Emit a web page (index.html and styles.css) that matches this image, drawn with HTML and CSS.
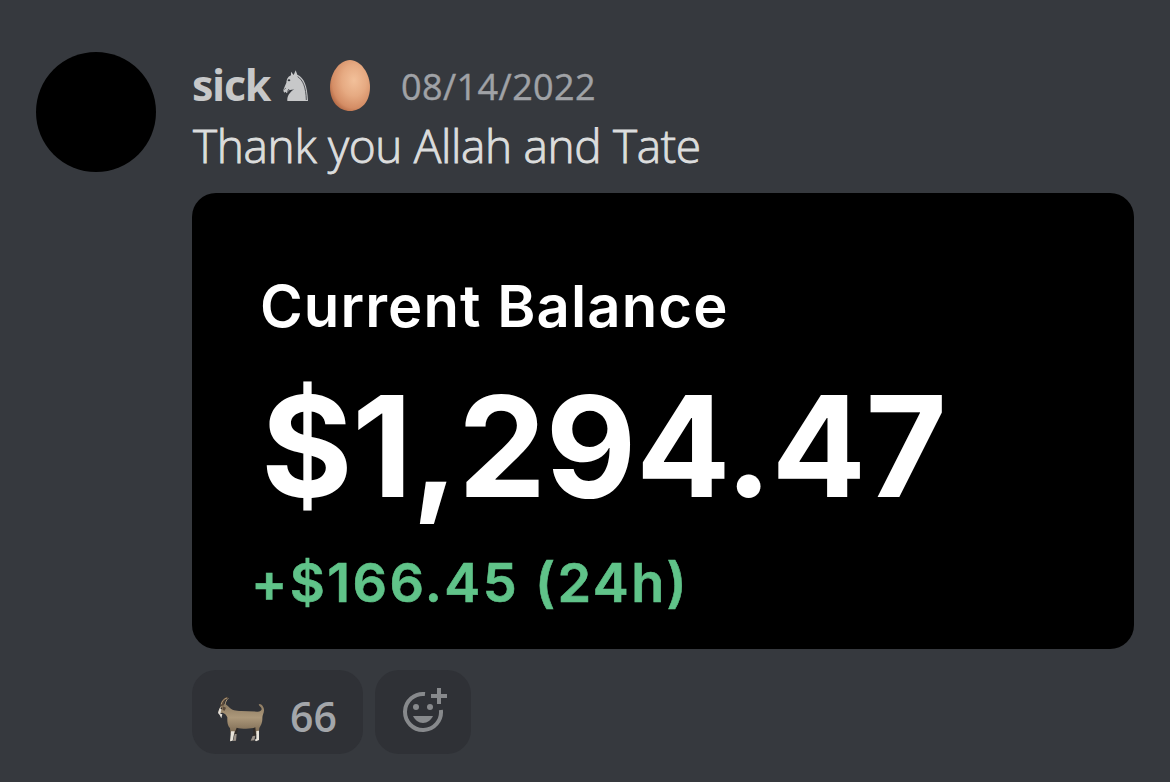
FILE: index.html
```
<!DOCTYPE html>
<html lang="en">
    <head>
        <meta charset="UTF-8">
        <meta name="viewport" content="width=device-width, initial-scale=1.0">
        <title>Message</title>
        <link rel="stylesheet" href="styles.css">
    </head>
    <body>
        <div class="message">
            <div class="message__avatar"></div>
            <div class="message__content">
                <div class="message__header">
                    <span class="message__author">sick</span>
                    <svg class="knight" viewBox="0 0 75 93">
                        <path fill="#c7c8c9" d="M24 5L32 15L38 1L43 14C63 23 73 46 75 93H13C12 76 20 68 34 57C24 61 19 58 16 64L11 70L8 65L4 68C0 64 1 59 3 55L10 38C11 25 17 19 24 16Z"/>
                        <path fill="none" stroke="#36393e" stroke-width="2.5" d="M44 20C60 30 69 52 70 90"/>
                        <ellipse cx="18" cy="31" rx="4" ry="3" fill="#36393e"/>
                        <path fill="none" stroke="#36393e" stroke-width="2.5" d="M4 58L8 55M13 65L18 57"/>
                    </svg>
                    <svg class="egg" viewBox="0 0 40 51">
                        <defs>
                            <radialGradient id="shell" cx=".6" cy=".4" r=".68">
                                <stop offset="0" stop-color="#f2c09a"/>
                                <stop offset=".45" stop-color="#e6aa82"/>
                                <stop offset=".8" stop-color="#d48d65"/>
                                <stop offset="1" stop-color="#ad6340"/>
                            </radialGradient>
                        </defs>
                        <path fill="url(#shell)" d="M20 0C31 0 40 14 40 27C40 42 31 51 20 51S0 42 0 27C0 14 9 0 20 0Z"/>
                    </svg>
                    <span class="message__date">08/14/2022</span>
                </div>
                <p class="message__text">Thank you Allah and Tate</p>
                <div class="balance">
                    <div class="balance__label">Current Balance</div>
                    <div class="balance__amount">$1,294.47</div>
                    <div class="balance__change">+$166.45 (24h)</div>
                </div>
                <div class="reactions">
                    <button class="reaction">
                        <svg class="goat" viewBox="0 0 192 168">
                            <defs>
                                <linearGradient id="coat" x1="0" y1="0" x2="0" y2="1">
                                    <stop offset="0" stop-color="#8d7b62"/>
                                    <stop offset=".45" stop-color="#ac987a"/>
                                    <stop offset="1" stop-color="#796750"/>
                                </linearGradient>
                            </defs>
                            <path fill="#302b28" d="M72 110L86 112L80 134L78 151L69 152L72 132ZM129 110L147 108L140 130L134 151L123 151L130 132Z"/>
                            <path fill="#9a9188" d="M74 132L80 132L78 152L69 153ZM128 138L136 137L133 151L122 152Z"/>
                            <path fill="url(#coat)" d="M32 48C36 40 49 41 56 50C66 61 77 62 93 63L142 65C151 65 155 61 155 57C155 51 148 49 146 44C148 40 156 43 160 52C166 65 157 73 157 84C158 96 153 106 148 114L146 132L138 132L136 112C123 118 94 117 80 113L73 130L62 132L60 115C51 105 52 94 52 82C49 74 44 70 38 68L28 70L25 65Z"/>
                            <path fill="#e9e4da" d="M63 124L74 124L68 152L60 154ZM139 123L147 122L147 150L138 154L134 150L139 146Z"/>
                            <path fill="#e3ded6" d="M31 50L34 59L31 71L37 73L34 85L29 75L24 69L27 59Z"/>
                            <path fill="#5a4939" d="M31 49C31 39 36 25 52 20L55 24C45 28 42 35 42 46ZM38 49L48 53L44 62L38 60Z"/>
                            <path fill="none" stroke="#b19a79" stroke-width="3" d="M34 43C35 34 42 26 51 24M45 45C46 36 50 29 55 25"/>
                            <circle cx="34" cy="55" r="2.5" fill="#292521"/>
                        </svg>
                        <span class="reaction__count">66</span>
                    </button>
                    <button class="reaction reaction--add" aria-label="Add reaction">
                        <svg class="add-icon" viewBox="0 0 44 44">
                            <path fill="none" stroke="#87898c" stroke-width="4" d="M22 6.1A18 18 0 1 0 37.9 22"/>
                            <path fill="#87898c" d="M34 0h4v6h6v4h-6v6h-4v-6h-6V6h6Z"/>
                            <circle cx="13" cy="19" r="3" fill="#87898c"/>
                            <circle cx="27" cy="19" r="3" fill="#87898c"/>
                            <path fill="#87898c" d="M10 28H30C28 32 24.5 35 20 35S12 32 10 28Z"/>
                        </svg>
                    </button>
                </div>
            </div>
        </div>
    </body>
</html>
```
FILE: styles.css
```
* {
    box-sizing: border-box;
}

body {
    margin: 0;
    background: #36393e;
    font-family: 'Open Sans', 'Noto Sans', sans-serif;
}

.message {
    display: flex;
    gap: 36px;
    padding: 52px 36px 28px;
}

.message__avatar {
    flex: none;
    width: 120px;
    height: 120px;
    border-radius: 50%;
    background: #000;
}

.message__content {
    flex: 1;
}

.message__header {
    display: flex;
    align-items: center;
    height: 67px;
}

.message__author {
    width: 91px;
    padding-bottom: 2px;
    font-size: 43px;
    font-weight: 700;
    line-height: 64px;
    letter-spacing: -1.3px;
    color: #c7c8c9;
}

.knight {
    width: 25px;
    height: 31px;
}

.egg {
    width: 40px;
    height: 51px;
    margin-left: 22px;
}

.message__date {
    padding-top: 3px;
    margin-left: 31px;
    font-size: 36px;
    line-height: 64px;
    letter-spacing: .4px;
    color: #a0a2a6;
    -webkit-text-stroke: .4px #a0a2a6;
}

.message__text {
    margin: -2px 0 0;
    height: 76px;
    padding-left: 1px;
    font-size: 46px;
    font-weight: 300;
    line-height: 57px;
    letter-spacing: -.35px;
    white-space: nowrap;
    color: #dcdddd;
    -webkit-text-stroke: .9px #dcdddd;
}

.balance {
    height: 456px;
    padding: 78px 59px 0;
    border-radius: 24px;
    background: #000;
    color: #fff;
    font-family: 'Inter', 'Liberation Sans', sans-serif;
    white-space: nowrap;
}

.balance__label {
    padding-left: 9px;
    font-size: 58px;
    font-weight: 600;
    line-height: 70px;
    letter-spacing: 1.1px;
}

.balance__amount {
    padding-left: 10px;
    font-size: 140px;
    font-weight: 700;
    line-height: 210px;
    letter-spacing: -.6px;
}

.balance__change {
    font-size: 54px;
    font-weight: 600;
    line-height: 64px;
    letter-spacing: 2.4px;
    color: #60c389;
    -webkit-text-stroke: .6px #60c389;
}

.reactions {
    display: flex;
    gap: 12px;
    margin-top: 21px;
}

.reaction {
    display: flex;
    align-items: center;
    width: 171px;
    height: 84px;
    padding: 0 0 0 18px;
    border: 0;
    border-radius: 24px;
    background: #2f3136;
    font-family: inherit;
}

.goat {
    width: 64px;
    height: 56px;
    margin-top: 12px;
}

.reaction__count {
    margin: 7px 0 0 16px;
    font-size: 41px;
    font-weight: 600;
    line-height: 56px;
    color: #a3a6aa;
}

.reaction--add {
    justify-content: center;
    width: 96px;
    padding: 0 0 0 4px;
}

.add-icon {
    width: 44px;
    height: 44px;
    margin-bottom: 4px;
}
```
